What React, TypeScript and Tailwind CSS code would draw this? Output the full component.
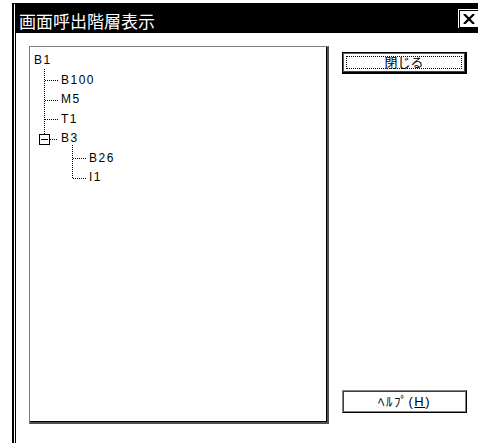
const rows = [
  { label: 'B1', pad: 'pl-[4px]' },
  { label: 'B100', pad: 'pl-[31px]' },
  { label: 'M5', pad: 'pl-[31px]' },
  { label: 'T1', pad: 'pl-[31px]' },
  { label: 'B3', pad: 'pl-[31px]' },
  { label: 'B26', pad: 'pl-[59px]' },
  { label: 'I1', pad: 'pl-[59px]' },
];

function TreeLines() {
  const dots = { stroke: '#000', strokeWidth: 1, strokeDasharray: '1 1', shapeRendering: 'crispEdges' as const };
  return (
    <svg className="absolute left-0 top-0" width="120" height="160">
      {/* root branch */}
      <line x1="14.5" y1="22" x2="14.5" y2="87" {...dots} />
      <line x1="15" y1="33.5" x2="28" y2="33.5" {...dots} />
      <line x1="15" y1="53.5" x2="28" y2="53.5" {...dots} />
      <line x1="15" y1="72.5" x2="28" y2="72.5" {...dots} />
      <line x1="20" y1="92.5" x2="28" y2="92.5" {...dots} />
      {/* collapse box */}
      <rect x="9.5" y="87.5" width="10" height="10" fill="#fff" stroke="#000" shapeRendering="crispEdges" />
      <line x1="11" y1="92.5" x2="18" y2="92.5" stroke="#000" shapeRendering="crispEdges" />
      {/* B3 branch */}
      <line x1="42.5" y1="98" x2="42.5" y2="131" {...dots} />
      <line x1="43" y1="111.5" x2="56" y2="111.5" {...dots} />
      <line x1="43" y1="131.5" x2="56" y2="131.5" {...dots} />
    </svg>
  );
}

export default function App() {
  return (
    <div className="w-[478px] h-[443px] overflow-hidden bg-white font-['Liberation_Sans','Noto_Sans_CJK_JP',sans-serif] text-black">
      {/* Window frame */}
      <div className="ml-[12px] mt-[3px] w-[466px] h-[460px] border-l-2 border-t border-black pl-px">
        <div className="h-full border-l border-black">
          {/* Title bar */}
          <div className="h-[29px] bg-black flex items-start justify-between">
            <span className="pl-[3px] pt-[8px] text-white text-[17px] leading-none font-['Noto_Sans_CJK_JP',sans-serif]">
              画面呼出階層表示
            </span>
            <div className="mt-[5px] w-[20px] h-[19px] bg-white pt-px pl-px">
              <div className="h-full border-l border-t border-b border-black flex items-center justify-center">
                <svg width="12" height="10" viewBox="0 0 12 10">
                  <path d="M1 0 L11 10 M11 0 L1 10" stroke="#000" strokeWidth="2.2" />
                </svg>
              </div>
            </div>
          </div>

          {/* Body */}
          <div className="flex pl-[13px] pt-[13px] gap-[13px]">
            {/* Tree */}
            <div className="w-[300px] h-[378px] border-t border-l border-[#808080] border-r-2 border-b-2 border-r-[#505050] border-b-[#505050]">
              <div className="relative h-full border-r border-b border-black pt-[4px] text-[12px] tracking-[1.5px]">
                <TreeLines />
                {rows.map((r) => (
                  <div key={r.label} className={`h-[19.5px] leading-[19.5px] ${r.pad}`}>
                    {r.label}
                  </div>
                ))}
              </div>
            </div>

            {/* Buttons */}
            <div className="w-[125px] h-[378px] flex flex-col justify-between pt-[6px] pb-[11px]">
              <button className="h-[22px] border border-black border-r-2 border-b-2 p-0">
                <div className="h-full border border-[#606060] border-r-[#404040] border-b-[#404040] p-[2px]">
                  <div className="h-full border border-dotted border-black flex items-center justify-center text-[13px] leading-none">
                    閉じる
                  </div>
                </div>
              </button>
              <button className="h-[23px] border border-[#808080] border-r-black border-b-black p-0">
                <div className="h-full border border-[#404040] border-r-[#808080] border-b-[#808080] flex items-center justify-center text-[13px] leading-none tracking-[1.5px]">
                  ﾍﾙﾌﾟ(<span className="underline">H</span>)
                </div>
              </button>
            </div>
          </div>
        </div>
      </div>
    </div>
  );
}
